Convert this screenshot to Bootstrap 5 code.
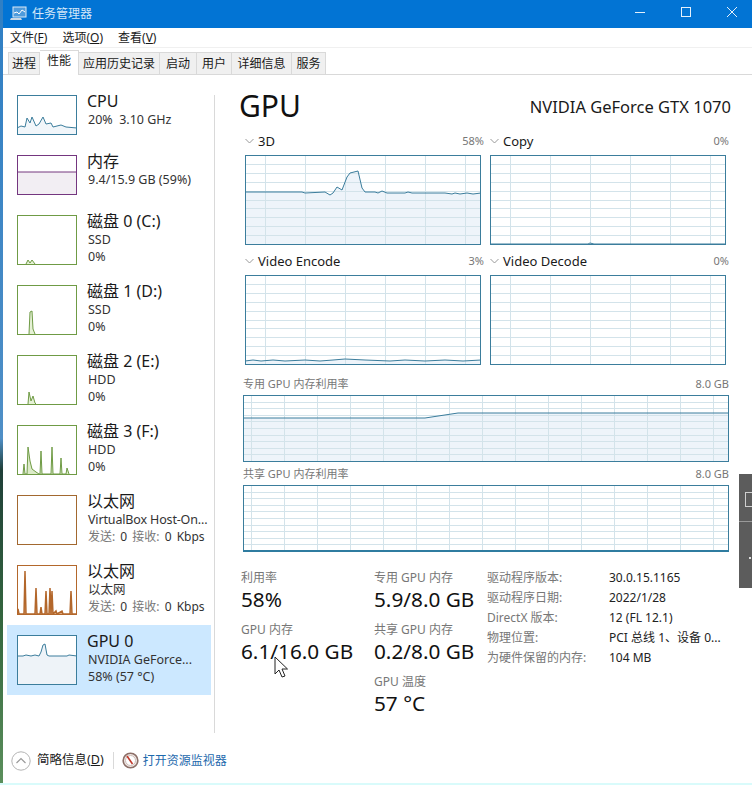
<!DOCTYPE html>
<html lang="zh-CN">
<head>
  <meta charset="UTF-8">
  <title>任务管理器</title>
  <meta name="viewport" content="width=device-width, initial-scale=1.0">
  <link href="https://cdn.jsdelivr.net/npm/bootstrap@5.3.0/dist/css/bootstrap.min.css" rel="stylesheet" />
  <style>
    html, body { height: 100%; }
    body {
      width: 752px; height: 785px; overflow: hidden; position: relative; background: #fff;
      font-family: "Noto Sans", "Noto Sans CJK SC", sans-serif; font-size: 12px; color: #1a1a1a;
    }
    .tm-edge { width: 3px; flex: none; background: linear-gradient(#2f7fc4 0, #4f8fc6 56%, #1f3f38 60%, #35683f 80%, #5b8f5c 100%); }
    .tm-window { flex: 1; min-width: 0; display: flex; flex-direction: column; }
    .tm-title { height: 28px; background: #0274d4; color: #d4e7f8; padding-left: 7px; }
    .tm-title span { line-height: 26px; margin-left: 5px; }
    .tm-ctrl { width: 46px; height: 28px; display: flex; align-items: center; justify-content: center; padding-bottom: 4px; }
    .tm-ctrl:last-child { margin-right: -3px; }
    .tm-menu { padding-left: 7px; gap: 15px; line-height: 20px; font-size: 12px; border-bottom: 1px solid #f0f0f0; height: 20px; }
    .tm-tabs { height: 27px; padding: 4px 0 0 5px; border-bottom: 1px solid #d9d9d9; flex-wrap: nowrap; gap: 0; }
    .tm-tabs .nav-link {
      height: 22px; padding: 0; margin: 0; font-size: 12px; line-height: 21px; color: #1a1a1a;
      background: #f0f0f0; border: 1px solid #d9d9d9; border-bottom: 0; border-left: 0; border-radius: 0; white-space: nowrap;
      text-align: center;
    }
    .tm-tabs .nav-item:first-child .nav-link { border-left: 1px solid #d9d9d9; }
    .tm-tabs .nav-link.active { height: 25px; margin: -2px 0 0 0; background: #fff; color: #1a1a1a; line-height: 20px; border-color: #d9d9d9; position: relative; z-index: 1; }
    .tm-main { height: 665px; }
    .tm-side { width: 212px; flex: none; padding: 10px 0 0 4px; position: relative; }
    .tm-rule { position: absolute; left: 211px; top: 20px; height: 638px; width: 1px; background: #d9d9d9; }
    .tm-item { width: 204px; padding: 0 0 0 10px; display: flex; }
    .tm-item.tall { height: 70px; }
    .tm-item.low { height: 60px; }
    .tm-item.sel { background: #cce8ff; }
    .tm-item svg { margin-top: 10px; flex: none; display: block; }
    .tm-item-text { margin-left: 10px; padding-top: 5px; min-width: 0; white-space: nowrap; }
    .tm-item-name { font-size: 16px; line-height: 22px; margin-bottom: -1px; }
    .tm-item-sub { line-height: 17px; font-size: 12.5px; color: #333; padding-left: 1px; }
    .tm-tight { letter-spacing: -.15px; }
    .tm-net { font-size: 12px; word-spacing: 2px; }
    .tm-muted { color: #777; }
    .tm-panel { flex: 1; padding-left: 25px; min-width: 0; position: relative; }
    .tm-head { height: 56px; padding: 14px 21px 0 0; }
    .tm-head h1 { font-size: 30px; line-height: 34px; margin: 0 0 0 -1px; font-weight: 400; color: #111; }
    .tm-head div { font-size: 16.5px; line-height: 24px; color: #1a1a1a; padding-top: 6px; }
    .tm-charts { display: grid; grid-template-columns: 245px 245px; row-gap: 6px; margin-left: 5px; }
    .tm-cell svg, .tm-wide svg { display: block; }
    .tm-cell-label { height: 20px; margin-bottom: 4px; width: 239px; line-height: 20px; font-size: 13px; }
    .tm-cell-label small { font-size: 11px; color: #777; }
    .tm-wide { margin-left: 3px; width: 486px; }
    .tm-wide-label { height: 16px; margin-bottom: 3px; line-height: 16px; font-size: 11px; color: #777; }
    .tm-stats { margin: 17px 0 0 1px; }
    .tm-stat-col { width: 133px; flex: none; }
    .tm-stat-col.two { width: 113px; }
    .tm-stat { height: 52px; }
    .tm-stat label { display: block; height: 18px; line-height: 18px; color: #777; font-size: 12px; }
    .tm-stat b { display: block; height: 26px; line-height: 24px; font-weight: 400; font-size: 20.75px; color: #111; white-space: nowrap; }
    .tm-info { display: grid; grid-template-columns: 122px auto; grid-auto-rows: 20px; line-height: 20px; margin-top: -1px; font-size: 12px; white-space: nowrap; }
    .tm-info .k { color: #777; }
    .tm-info .v { color: #222; }
    .tm-foot { height: 43px; padding: 0 0 2px 8px; font-size: 12.5px; }
    .tm-foot a { color: #1d69ad; text-decoration: none; font-size: 12px; }
    .tm-foot-label { margin-left: 2px; }
    .tm-sep { width: 1px; height: 17px; background: #d9d9d9; margin: 0 8px 0 9px; }
    .tm-cyan { height: 2px; background: #d9fbfb; }
    .tm-float { position: absolute; right: 0; top: 474px; width: 13px; height: 114px; background: #5c5c5c; }
    .tm-float i { position: absolute; left: 6px; top: 18px; width: 9px; height: 15px; border: 1px solid #cfcfcf; }
    .tm-float u { position: absolute; left: 0; right: 0; top: 47px; height: 1px; background: #999; }
    .tm-float s { position: absolute; left: 10px; top: 83px; width: 2px; height: 2px; background: #ddd; }
    .tm-cursor { position: absolute; left: 274px; top: 656px; }
  </style>
</head>
<body class="d-flex flex-column">
  <div class="d-flex flex-grow-1">
    <div class="tm-edge"></div>
    <div class="tm-window">
      <!-- 标题栏 -->
      <div class="tm-title d-flex align-items-center">
        <svg width="17" height="16" viewBox="0 0 17 16">
          <rect x="3" y="1" width="13" height="10" fill="#4e9bdc" stroke="#dce9f5"/>
          <path d="M4 7l3-1 2 2 3-4 3 2" fill="none" stroke="#fff"/>
          <path d="M1 12h10l1 2H0z" fill="#c9d7e4"/>
        </svg>
        <span class="flex-grow-1">任务管理器</span>
        <div class="tm-ctrl"><svg width="10" height="10"><path d="M0 5.500h10" stroke="#e4f0fb"/></svg></div>
        <div class="tm-ctrl"><svg width="10" height="10"><rect x=".5" y=".5" width="9" height="9" fill="none" stroke="#e4f0fb"/></svg></div>
        <div class="tm-ctrl"><svg width="10" height="10"><path d="M0 0l10 10M10 0L0 10" stroke="#e4f0fb"/></svg></div>
      </div>
      <!-- 菜单 -->
      <div class="tm-menu d-flex">
        <span>文件(<u>F</u>)</span><span>选项(<u>O</u>)</span><span>查看(<u>V</u>)</span>
      </div>
      <!-- 标签页 -->
      <ul class="nav nav-tabs tm-tabs">
        <li class="nav-item"><a class="nav-link" style="width:32px">进程</a></li>
        <li class="nav-item"><a class="nav-link active" style="width:39px">性能</a></li>
        <li class="nav-item"><a class="nav-link" style="width:81px">应用历史记录</a></li>
        <li class="nav-item"><a class="nav-link" style="width:37px">启动</a></li>
        <li class="nav-item"><a class="nav-link" style="width:35px">用户</a></li>
        <li class="nav-item"><a class="nav-link" style="width:60px">详细信息</a></li>
        <li class="nav-item"><a class="nav-link" style="width:34px">服务</a></li>
      </ul>
      <div class="tm-main d-flex">
        <div class="tm-side">
          <div id="sideList"></div>
          <div class="tm-rule"></div>
        </div>
        <div class="tm-panel">
          <div class="tm-head d-flex justify-content-between">
            <h1>GPU</h1>
            <div>NVIDIA GeForce GTX 1070</div>
          </div>
          <div class="tm-charts" id="bigCharts"></div>
          <div class="tm-wide" style="margin-top:11px" id="wide1"></div>
          <div class="tm-wide" style="margin-top:4px" id="wide2"></div>
          <div class="tm-stats d-flex">
            <div class="tm-stat-col">
              <div class="tm-stat"><label>利用率</label><b>58%</b></div>
              <div class="tm-stat"><label>GPU 内存</label><b>6.1/16.0 GB</b></div>
            </div>
            <div class="tm-stat-col two">
              <div class="tm-stat"><label>专用 GPU 内存</label><b>5.9/8.0 GB</b></div>
              <div class="tm-stat"><label>共享 GPU 内存</label><b>0.2/8.0 GB</b></div>
              <div class="tm-stat"><label>GPU 温度</label><b>57 °C</b></div>
            </div>
            <div class="tm-info">
              <span class="k">驱动程序版本:</span><span class="v">30.0.15.1165</span>
              <span class="k">驱动程序日期:</span><span class="v">2022/1/28</span>
              <span class="k">DirectX 版本:</span><span class="v">12 (FL 12.1)</span>
              <span class="k">物理位置:</span><span class="v">PCI 总线 1、设备 0...</span>
              <span class="k">为硬件保留的内存:</span><span class="v">104 MB</span>
            </div>
          </div>
        </div>
      </div>
      <!-- 底部 -->
      <div class="tm-foot d-flex align-items-center">
        <svg width="20" height="20" viewBox="0 0 20 20" class="me-1">
          <circle cx="10" cy="10" r="9.2" fill="#fff" stroke="#b4b4b4"/>
          <path d="M5.500 12l4.500-4.500 4.500 4.500" fill="none" stroke="#9a9a9a" stroke-width="1.2"/>
        </svg>
        <span class="tm-foot-label">简略信息(<u>D</u>)</span>
        <div class="tm-sep"></div>
        <svg width="17" height="17" viewBox="0 0 17 17" class="me-1">
          <circle cx="8.500" cy="8.500" r="7.300" fill="#f1e9e6" stroke="#8c6f68" stroke-width="1.600"/>
          <circle cx="8.500" cy="8.500" r="5" fill="#fff" stroke="#cdbdb8"/>
          <path d="M5 4l5.500 8" stroke="#c0392b" stroke-width="1.600"/>
        </svg>
        <a href="#">打开资源监视器</a>
      </div>
    </div>
  </div>
  <div class="tm-cyan"></div>

  <!-- 右侧浮层 -->
  <div class="tm-float"><i></i><u></u><s></s></div>
  <!-- 鼠标指针 -->
  <svg class="tm-cursor" width="14" height="23" viewBox="0 0 14 23">
    <path d="M1 1v17l4-4 3 7 3-1-3-7h5.500z" fill="#fff" stroke="#222" stroke-linejoin="round"/>
  </svg>

  <script src="https://cdn.jsdelivr.net/npm/bootstrap@5.3.0/dist/js/bootstrap.bundle.min.js"></script>
  <script>
    const BLUE = "#3b7d9c";
    const GREEN = "#6f9b45";
    const BROWN = "#a2682f";
    const PURPLE = "#74367f";
    const NET = "<span class='tm-net'><span class='tm-muted'>发送:</span> 0 <span class='tm-muted'>接收:</span> 0 Kbps</span>";

    // 左侧列表数据
    const sideData = [
      { name: "CPU", lines: ["20%&nbsp; 3.10 GHz"], h: 40, color: BLUE, fill: "#f1f6fa", size: "low",
        pts: [[0,33],[4,31],[8,32],[10,23],[13,28],[15,22],[19,31],[22,29],[26,22],[29,29],[34,28],[36,32],[44,30],[49,32],[60,33]] },
      { name: "内存", lines: ["9.4/15.9 GB (59%)"], h: 40, color: PURPLE, fill: "#f2eef3", size: "low",
        pts: [[0,17],[60,17]] },
      { name: "磁盘 0 (C:)", lines: ["SSD", "0%"], h: 50, color: GREEN, fill: "#e6f1d6", size: "tall",
        pts: [[9,49],[11,45],[13,48],[15,45],[18,49]] },
      { name: "磁盘 1 (D:)", lines: ["SSD", "0%"], h: 50, color: GREEN, fill: "#e6f1d6", size: "tall",
        pts: [[12,49],[13,27],[15,26],[16,44],[18,49]] },
      { name: "磁盘 2 (E:)", lines: ["HDD", "0%"], h: 50, color: GREEN, fill: "#e6f1d6", size: "tall",
        pts: [[11,49],[12,37],[14,46],[16,41],[18,48],[19,49]] },
      { name: "磁盘 3 (F:)", lines: ["HDD", "0%"], h: 50, color: GREEN, fill: "#dcebc8", size: "tall",
        pts: [[6,49],[7,39],[8,49],[10,49],[11,22],[13,36],[15,44],[19,47],[22,49],[23,49],[24,26],[25,49],[34,49],[35,22],[36,49],[43,49],[44,33],[45,49],[49,49],[50,43],[52,49]] },
      { name: "以太网", lines: ["<span class='tm-tight'>VirtualBox Host-On...</span>", NET], h: 50, color: BROWN, fill: "#f4e3d2", size: "tall",
        pts: [] },
      { name: "以太网", lines: ["以太网", NET], h: 50, color: "#b3672b", fill: "#dca77a", size: "tall", thick: true,
        pts: [[0,49],[1,44],[2,49],[7,49],[8,6],[9,49],[18,49],[19,23],[20,49],[23,49],[24,42],[25,49],[28,49],[29,26],[30,49],[32,49],[33,23],[34,49],[35,26],[36,49],[39,46],[40,49],[45,46],[46,49],[53,49],[54,26],[55,49],[60,49]] },
      { name: "GPU 0", lines: ["NVIDIA GeForce...", "58% (57 °C)"], h: 50, color: BLUE, fill: "#eef3f8", bg: "#fff", size: "tall sel",
        pts: [[0,21],[6,21],[9,20],[14,21],[18,20],[22,21],[24,17],[26,10],[28,9],[30,20],[32,21],[50,21],[52,20],[60,21]] }
    ];

    // 折线图 svg 生成
    function spark(item) {
      const w = 60, h = item.h;
      let body = "";
      if (item.pts.length) {
        const line = item.pts.map(p => p.join(",")).join(" ");
        const first = item.pts[0][0], last = item.pts[item.pts.length - 1][0];
        body += `<polygon points="${first},${h} ${line} ${last},${h}" fill="${item.fill}"/>`;
        body += `<polyline points="${line}" fill="none" stroke="${item.color}" stroke-width="${item.thick ? 1.5 : 1}"/>`;
      }
      return `<svg width="${w}" height="${h}" viewBox="0 0 ${w} ${h}">
        <rect width="${w}" height="${h}" fill="${item.bg || "#fff"}"/>${body}
        <rect x=".5" y=".5" width="${w - 1}" height="${h - 1}" fill="none" stroke="${item.color}"/></svg>`;
    }

    function bigChart(w, h, stepX, startX, pts, bottom) {
      let grid = "";
      for (let x = startX; x < w; x += stepX) grid += `M${x + 0.5} 0V${h}`;
      for (let i = 1; i < 10; i++) { const y = Math.round(i * (h - 1) / 10) + 0.5; grid += `M0 ${y}H${w}`; }
      let fill = "", line = "";
      if (pts.length) {
        const d = pts.map(p => p.join(",")).join(" ");
        fill = `<polygon points="0,${h} ${d} ${w},${h}" fill="#eef4fa"/>`;
        line = `<polyline points="${d}" fill="none" stroke="${BLUE}"/>`;
      }
      return `<svg width="${w}" height="${h}" viewBox="0 0 ${w} ${h}">
        <rect width="${w}" height="${h}" fill="#fff"/>${fill}
        <path d="${grid}" stroke="#d3e3ea" fill="none"/>${line}
        <rect x=".5" y=".5" width="${w - 1}" height="${h - 1}" fill="none" stroke="${BLUE}"/>
        ${bottom ? `<rect x="0" y="${h - 2}" width="${w}" height="2" fill="#2f7ca0"/>` : ""}</svg>`;
    }

    document.getElementById("sideList").innerHTML = sideData.map(item => `
      <div class="tm-item ${item.size}">
        ${spark(item)}
        <div class="tm-item-text">
          <div class="tm-item-name">${item.name}</div>
          ${item.lines.map(l => `<div class="tm-item-sub">${l}</div>`).join("")}
        </div>
      </div>`).join("");

    const chevron = `<svg width="9" height="6" viewBox="0 0 9 6" class="me-1"><path d="M.5 1l4 4 4-4" fill="none" stroke="#999"/></svg>`;
    const chart3d = [[0,37],[57,37],[60,38],[80,37],[85,40],[88,38],[92,32],[97,35],[102,22],[105,18],[113,16],[117,33],[120,37],[130,37],[133,38],[137,36],[142,38],[160,38],[163,37],[167,38],[200,38],[207,39],[210,38],[215,39],[222,38],[228,39],[236,38]];
    const chartEnc = [[0,86],[8,85],[16,86],[28,85],[40,86],[60,85],[75,86],[88,85],[100,84],[120,85],[145,86],[160,85],[180,86],[200,85],[218,86],[236,85]];
    const bigData = [
      { name: "3D", val: "58%", pts: chart3d },
      { name: "Copy", val: "0%", pts: [[0,89],[98,89],[100,88],[104,89],[236,89]] },
      { name: "Video Encode", val: "3%", pts: chartEnc },
      { name: "Video Decode", val: "0%", pts: [] }
    ];
    document.getElementById("bigCharts").innerHTML = bigData.map(c => `
      <div class="tm-cell">
        <div class="tm-cell-label d-flex align-items-center">
          ${chevron}<span class="flex-grow-1">${c.name}</span><small>${c.val}</small>
        </div>
        ${bigChart(236, 90, 40, 20, c.pts)}
      </div>`).join("");

    function wide(id, label, pts, bottom) {
      document.getElementById(id).innerHTML = `
        <div class="tm-wide-label d-flex justify-content-between"><span>${label}</span><span>8.0 GB</span></div>
        ${bigChart(486, 67, 33, 8, pts, bottom)}`;
    }
    wide("wide1", "专用 GPU 内存利用率", [[0,23],[182,23],[215,18],[486,18]]);
    wide("wide2", "共享 GPU 内存利用率", [], true);
  </script>
</body>
</html>
